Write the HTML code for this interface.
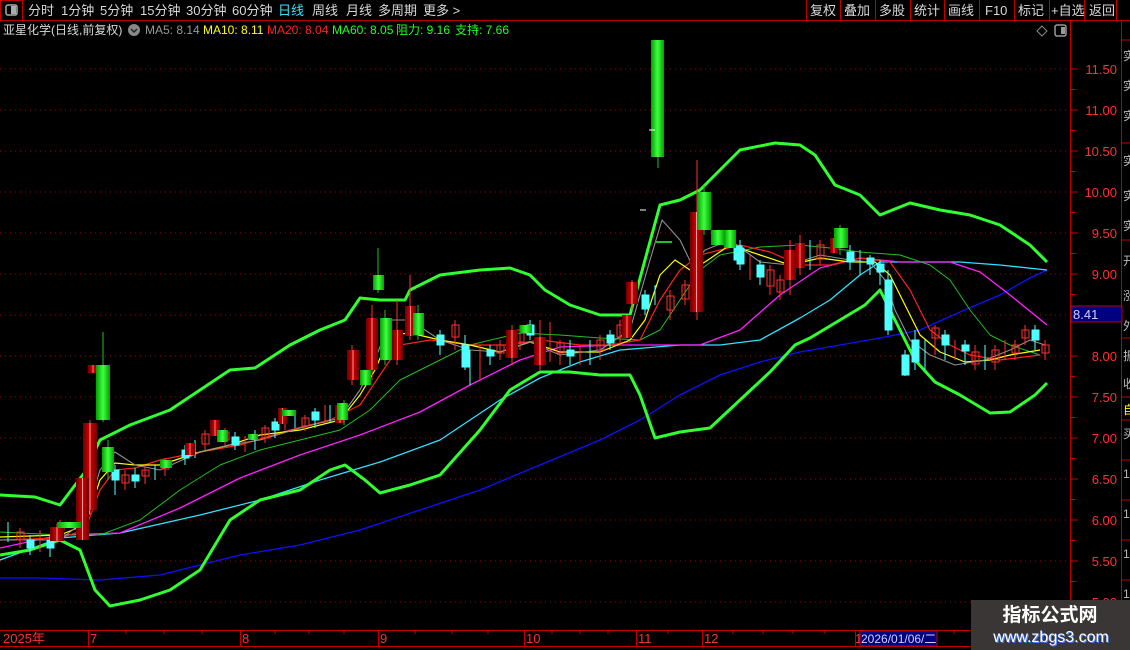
<!DOCTYPE html>
<html><head><meta charset="utf-8">
<style>
html,body{margin:0;padding:0;background:#000;width:1130px;height:650px;overflow:hidden;font-family:"Liberation Sans","Noto Sans CJK SC",sans-serif;}
.t{position:absolute;white-space:nowrap;}
</style></head><body>
<div style="position:relative;width:1130px;height:650px;">
<svg width="1130" height="650" style="position:absolute;left:0;top:0" font-family="Liberation Sans, Noto Sans CJK SC, sans-serif">
<defs>
<linearGradient id="rg" x1="0" x2="1"><stop offset="0" stop-color="#6a0000"/><stop offset="0.45" stop-color="#d00000"/><stop offset="0.5" stop-color="#ffffff"/><stop offset="0.55" stop-color="#d00000"/><stop offset="1" stop-color="#6a0000"/></linearGradient>
<linearGradient id="gg" x1="0" x2="1"><stop offset="0" stop-color="#00a000"/><stop offset="0.5" stop-color="#40ff40"/><stop offset="1" stop-color="#00a000"/></linearGradient>
</defs>
<!-- top toolbar -->
<rect x="0.5" y="0.5" width="22" height="20" fill="none" stroke="#c00000"/>
<rect x="6" y="5" width="11" height="10" rx="2" fill="none" stroke="#aaa" stroke-width="1.5"/><rect x="11" y="6" width="5" height="8" fill="#aaa"/>
<line x1="0" y1="20.5" x2="1130" y2="20.5" stroke="#c00000"/>
<g stroke="#c00000"><line x1="806.5" y1="0" x2="806.5" y2="20"/><line x1="840.5" y1="0" x2="840.5" y2="20"/><line x1="875.5" y1="0" x2="875.5" y2="20"/><line x1="910.5" y1="0" x2="910.5" y2="20"/><line x1="944.5" y1="0" x2="944.5" y2="20"/><line x1="979.5" y1="0" x2="979.5" y2="20"/><line x1="1014.5" y1="0" x2="1014.5" y2="20"/><line x1="1049.5" y1="0" x2="1049.5" y2="20"/><line x1="1084.5" y1="0" x2="1084.5" y2="20"/><line x1="1116.5" y1="0" x2="1116.5" y2="20"/></g>
<g font-size="13" fill="#d8d8d8">
<text x="28" y="15">分时</text><text x="61" y="15">1分钟</text><text x="100" y="15">5分钟</text><text x="140" y="15">15分钟</text><text x="186" y="15">30分钟</text><text x="232" y="15">60分钟</text><text x="278" y="15" fill="#40e0ff">日线</text><text x="312" y="15">周线</text><text x="346" y="15">月线</text><text x="378" y="15">多周期</text><text x="423" y="15">更多 &gt;</text>
<text x="810" y="15">复权</text><text x="844" y="15">叠加</text><text x="879" y="15">多股</text><text x="914" y="15">统计</text><text x="948" y="15">画线</text><text x="985" y="15">F10</text><text x="1018" y="15">标记</text><text x="1051" y="15">+自选</text><text x="1089" y="15">返回</text>
</g>
<!-- title row -->
<g font-size="12">
<text x="3" y="34" fill="#d8d8d8">亚星化学(日线,前复权)</text>
<circle cx="134" cy="30" r="6" fill="#888"/><path d="M131 29 L134 32 L137 29" stroke="#222" fill="none" stroke-width="1.5"/>
<text x="145" y="34" fill="#999">MA5: 8.14</text>
<text x="203" y="34" fill="#ffff00">MA10: 8.11</text>
<text x="267" y="34" fill="#ff2020">MA20: 8.04</text>
<text x="332" y="34" fill="#20ff20">MA60: 8.05</text>
<text x="396" y="34" fill="#20ff20">阻力: 9.16</text>
<text x="455" y="34" fill="#20ff20">支持: 7.66</text>
</g>
<path d="M1042 26 L1047 31 L1042 36 L1037 31 Z" fill="none" stroke="#888"/>
<rect x="1055" y="25" width="11" height="11" rx="2" fill="none" stroke="#999" stroke-width="1.5"/><rect x="1061" y="27" width="4" height="7" fill="#999"/>
<!-- grid -->
<g stroke="#a00000" stroke-dasharray="1,4">
<line x1="0" y1="69" x2="1068" y2="69"/><line x1="0" y1="110" x2="1068" y2="110"/><line x1="0" y1="151" x2="1068" y2="151"/><line x1="0" y1="192" x2="1068" y2="192"/><line x1="0" y1="233" x2="1068" y2="233"/><line x1="0" y1="274" x2="1068" y2="274"/><line x1="0" y1="315" x2="1068" y2="315"/><line x1="0" y1="356" x2="1068" y2="356"/><line x1="0" y1="397" x2="1068" y2="397"/><line x1="0" y1="438" x2="1068" y2="438"/><line x1="0" y1="479" x2="1068" y2="479"/><line x1="0" y1="520" x2="1068" y2="520"/><line x1="0" y1="561" x2="1068" y2="561"/><line x1="0" y1="602" x2="1068" y2="602"/>
</g>
<!-- axis -->
<line x1="1070.5" y1="21" x2="1070.5" y2="650" stroke="#c00000"/>
<line x1="1121.5" y1="21" x2="1121.5" y2="650" stroke="#c00000"/>
<g stroke="#c00000"><path d="M1071 69h7M1071 89.5h4M1071 110h7M1071 130.5h4M1071 151h7M1071 171.5h4M1071 192h7M1071 212.5h4M1071 233h7M1071 253.5h4M1071 274h7M1071 294.5h4M1071 356h7M1071 376.5h4M1071 397h7M1071 417.5h4M1071 438h7M1071 458.5h4M1071 479h7M1071 499.5h4M1071 520h7M1071 540.5h4M1071 561h7M1071 581.5h4M1071 602h7"/></g>
<g font-size="13" fill="#ff3030" text-anchor="end">
<text x="1117" y="74">11.50</text><text x="1117" y="115">11.00</text><text x="1117" y="156">10.50</text><text x="1117" y="197">10.00</text><text x="1117" y="238">9.50</text><text x="1117" y="279">9.00</text><text x="1117" y="361">8.00</text><text x="1117" y="402">7.50</text><text x="1117" y="443">7.00</text><text x="1117" y="484">6.50</text><text x="1117" y="525">6.00</text><text x="1117" y="566">5.50</text><text x="1117" y="607">5.00</text>
</g>
<rect x="1071" y="306" width="51" height="16" fill="#000080" stroke="#c00000"/>
<text x="1073" y="319" font-size="13" fill="#d0d0ff">8.41</text>
<g stroke="#c00000"><path d="M1122 40h8M1122 143h8M1122 240h8M1122 338h8M1122 397h8M1122 420h8M1122 460h8M1122 500h8M1122 540h8M1122 580h8"/></g>
<g font-size="12" fill="#bbb"><text x="1123" y="60">实</text><text x="1123" y="90">实</text><text x="1123" y="120">实</text><text x="1123" y="165">实</text><text x="1123" y="200">实</text><text x="1123" y="230">实</text><text x="1123" y="265">开</text><text x="1123" y="300">涨</text><text x="1123" y="330">外</text><text x="1123" y="360">振</text><text x="1123" y="388">收</text><text x="1123" y="414" fill="#ff0">自</text><text x="1123" y="438">买</text><text x="1123" y="478">1</text><text x="1123" y="518">1</text><text x="1123" y="558">1</text><text x="1123" y="598">1</text></g>
<!-- bands & MAs -->
<g fill="none" stroke-linejoin="round">
<polyline stroke="#1010ff" stroke-width="1.3" points="0,578 40,578 100,580 160,575 240,555 300,545 360,530 420,510 480,490 540,465 600,440 640,420 680,395 720,375 760,362 800,352 840,345 880,338 920,330 960,312 1000,295 1030,278 1047,270"/>
<polyline stroke="#30e0ff" stroke-width="1.3" points="0,560 60,538 120,533 200,515 260,500 320,480 380,462 440,440 500,400 540,378 580,362 620,350 680,345 720,345 760,340 800,318 830,300 860,275 880,262 920,262 960,262 1000,265 1047,270"/>
<polyline stroke="#ff20ff" stroke-width="1.3" points="0,548 60,535 120,533 180,508 240,478 300,455 360,435 420,412 470,385 520,360 560,347 620,345 660,345 700,345 740,330 780,295 820,268 860,258 900,262 950,262 980,272 1010,295 1047,325"/>
<polyline stroke="#20c020" stroke-width="1" points="0,532 60,535 100,535 140,520 180,490 220,465 260,450 300,440 340,430 370,410 400,380 440,360 470,345 520,333 560,335 600,338 640,340 660,330 680,300 700,270 720,255 760,247 800,245 830,248 860,252 900,255 930,265 950,280 970,310 990,335 1010,345 1040,355"/>
<polyline stroke="#ff2020" stroke-width="1.2" points="0,540 60,538 85,530 100,490 115,470 135,468 160,460 200,452 240,445 290,430 330,420 360,405 380,375 400,345 430,340 470,345 510,345 540,340 580,345 610,345 640,340 660,300 680,270 700,255 740,245 770,252 800,265 830,265 860,258 890,262 910,290 930,330 950,345 970,355 1000,360 1040,355"/>
<polyline stroke="#ffff00" stroke-width="1.2" points="0,537 60,535 85,525 100,480 115,463 135,465 160,465 200,452 230,445 260,435 300,430 340,420 360,395 375,370 390,335 410,333 440,340 470,345 500,352 530,342 560,352 600,352 630,340 645,320 660,275 675,260 690,270 705,262 730,245 760,255 790,265 820,258 850,262 875,262 890,275 905,305 920,335 940,352 965,362 990,360 1010,355 1040,350"/>
<polyline stroke="#909090" stroke-width="1.1" points="0,540 60,540 85,520 100,470 115,452 135,465 160,470 200,452 230,445 260,440 300,428 340,418 360,390 375,360 390,320 410,320 440,340 470,350 500,352 530,342 560,355 600,350 630,330 650,260 662,220 680,240 692,265 705,250 730,240 760,262 790,265 820,255 850,260 870,262 885,280 895,310 910,340 930,355 955,365 985,360 1010,350 1030,340 1045,345"/>
<polyline stroke="#30ff30" stroke-width="3" points="0,495 35,497 60,505 85,472 100,440 130,425 170,410 200,390 230,370 255,368 290,345 320,330 345,320 360,298 380,300 405,300 410,290 440,275 480,270 510,268 530,275 545,290 570,305 600,315 630,315 645,260 660,205 680,200 700,190 740,150 775,143 800,145 815,155 835,185 860,195 880,215 910,203 940,210 970,215 1000,225 1030,245 1047,262"/>
<polyline stroke="#30ff30" stroke-width="3" points="0,555 30,550 60,540 80,550 95,590 110,606 140,600 170,590 200,570 230,520 260,500 300,490 330,470 345,465 365,480 380,493 410,485 440,475 480,430 510,390 540,372 570,372 600,375 630,375 640,395 655,438 680,432 710,428 740,400 770,372 795,345 810,338 840,320 865,305 880,290 895,320 915,360 935,382 960,395 990,413 1010,412 1035,395 1047,383"/>
</g>
<!-- small candles -->
<g stroke-width="1">
<g stroke="#ff3030" fill="none">
<path d="M20 528v20M40 530v22M60 520v18M125 470v20M145 466v18M165 458v18M205 430v20M225 428v18M245 436v16M265 425v18M285 410v20M305 415v16M325 405v18M455 320v30M480 345v35M500 340v20M520 325v25M550 322v40M560 340v25M580 345v20M600 335v25M620 320v25M670 290v30M685 280v25M750 255v25M770 265v30M780 275v25M820 240v25M935 325v30M955 340v20M975 345v25M995 345v25M1005 340v20M1015 340v20M1025 325v20M1045 340v20"/>
<rect x="17" y="532" width="7" height="8"/><rect x="57" y="524" width="7" height="6"/><rect x="122" y="475" width="7" height="8"/><rect x="142" y="470" width="7" height="6"/><rect x="162" y="462" width="7" height="7"/><rect x="202" y="434" width="7" height="10"/><rect x="222" y="432" width="7" height="8"/><rect x="262" y="428" width="7" height="10"/><rect x="302" y="418" width="7" height="8"/><rect x="452" y="325" width="7" height="12"/><rect x="497" y="345" width="7" height="8"/><rect x="517" y="330" width="7" height="12"/><rect x="557" y="343" width="7" height="10"/><rect x="597" y="340" width="7" height="10"/><rect x="617" y="325" width="7" height="12"/><rect x="667" y="296" width="7" height="14"/><rect x="682" y="285" width="7" height="14"/><rect x="767" y="270" width="7" height="16"/><rect x="777" y="280" width="7" height="12"/><rect x="817" y="245" width="7" height="14"/><rect x="932" y="328" width="7" height="10"/><rect x="972" y="352" width="7" height="12"/><rect x="992" y="350" width="7" height="12"/><rect x="1012" y="345" width="7" height="8"/><rect x="1022" y="330" width="7" height="8"/><rect x="1042" y="345" width="7" height="8"/>
</g>
<g stroke="#50ffff" fill="#50ffff">
<path d="M8 522v20M30 535v20M50 535v22M115 465v30M135 468v20M155 465v15M185 445v20M195 440v18M235 432v18M255 430v20M275 418v20M295 410v18M315 408v20M330 405v18M440 330v25M465 335v35M470 350v35M490 345v20M530 320v20M570 340v25M590 340v25M610 330v20M645 290v25M655 285v20M740 240v30M760 260v25M810 240v30M850 245v25M860 250v25M870 255v20M880 260v25M915 330v40M925 340v30M945 330v30M965 340v25M985 345v25M1035 325v25"/>
<rect x="27" y="540" width="7" height="8"/><rect x="47" y="540" width="7" height="8"/><rect x="112" y="470" width="7" height="10"/><rect x="132" y="475" width="7" height="6"/><rect x="182" y="450" width="7" height="8"/><rect x="232" y="437" width="7" height="8"/><rect x="272" y="422" width="7" height="8"/><rect x="312" y="412" width="7" height="8"/><rect x="437" y="335" width="7" height="10"/><rect x="462" y="345" width="7" height="22"/><rect x="487" y="350" width="7" height="6"/><rect x="527" y="325" width="7" height="10"/><rect x="567" y="350" width="7" height="6"/><rect x="607" y="335" width="7" height="8"/><rect x="642" y="295" width="7" height="14"/><rect x="737" y="248" width="7" height="16"/><rect x="757" y="265" width="7" height="12"/><rect x="847" y="252" width="7" height="10"/><rect x="867" y="258" width="7" height="6"/><rect x="877" y="264" width="7" height="8"/><rect x="912" y="340" width="7" height="22"/><rect x="942" y="335" width="7" height="10"/><rect x="962" y="345" width="7" height="6"/><rect x="1032" y="330" width="7" height="10"/>
</g>
<!-- big cyan -->
<g stroke="#50ffff" fill="#50ffff"><path d="M888 270v65M905 350v26"/><rect x="885" y="280" width="7" height="50"/><rect x="902" y="355" width="7" height="20"/><rect x="734" y="246" width="8" height="14"/></g>
</g>
<!-- big red candles -->
<g>
<path d="M90 420v95M372 305v75M397 300v65M410 275v65M512 325v40M540 320v50M632 280v30M697 160v160M790 240v55M800 235v40M60 520v20M352 345v40" stroke="#ff3030"/>
<rect x="83" y="423" width="14" height="87" fill="url(#rg)"/>
<rect x="76" y="478" width="13" height="62" fill="url(#rg)"/>
<rect x="50" y="527" width="14" height="14" fill="url(#rg)"/>
<rect x="88" y="365" width="10" height="8" fill="url(#rg)"/>
<rect x="366" y="318" width="12" height="52" fill="url(#rg)"/>
<rect x="347" y="350" width="12" height="30" fill="url(#rg)"/>
<rect x="335" y="405" width="10" height="18" fill="url(#rg)"/>
<rect x="392" y="330" width="11" height="30" fill="url(#rg)"/>
<rect x="405" y="306" width="11" height="30" fill="url(#rg)"/>
<rect x="506" y="330" width="12" height="28" fill="url(#rg)"/>
<rect x="534" y="337" width="12" height="28" fill="url(#rg)"/>
<rect x="626" y="282" width="12" height="22" fill="url(#rg)"/>
<rect x="622" y="315" width="10" height="23" fill="url(#rg)"/>
<rect x="690" y="212" width="13" height="100" fill="url(#rg)"/>
<rect x="784" y="250" width="12" height="30" fill="url(#rg)"/>
<rect x="795" y="243" width="10" height="25" fill="url(#rg)"/>
<rect x="830" y="238" width="8" height="15" fill="url(#rg)"/>
<rect x="210" y="420" width="10" height="16" fill="url(#rg)"/>
<rect x="185" y="443" width="10" height="12" fill="url(#rg)"/>
<rect x="278" y="408" width="9" height="16" fill="url(#rg)"/>
</g>
<!-- big green candles -->
<g>
<path d="M103 332v90M108 440v40M658 40v128M704 185v50M378 248v45M385 310v55M418 305v35M840 225v30M344 400v25" stroke="#20c020"/>
<rect x="96" y="365" width="14" height="55" fill="url(#gg)"/>
<rect x="102" y="447" width="12" height="25" fill="url(#gg)"/>
<rect x="57" y="522" width="24" height="6" fill="url(#gg)"/>
<rect x="651" y="40" width="13" height="117" fill="url(#gg)"/>
<rect x="697" y="192" width="14" height="38" fill="url(#gg)"/>
<rect x="711" y="230" width="14" height="15" fill="url(#gg)"/>
<rect x="724" y="230" width="12" height="18" fill="url(#gg)"/>
<rect x="373" y="275" width="11" height="15" fill="url(#gg)"/>
<rect x="380" y="318" width="12" height="42" fill="url(#gg)"/>
<rect x="413" y="313" width="11" height="22" fill="url(#gg)"/>
<rect x="834" y="228" width="14" height="20" fill="url(#gg)"/>
<rect x="337" y="403" width="11" height="17" fill="url(#gg)"/>
<rect x="360" y="370" width="11" height="15" fill="url(#gg)"/>
<rect x="217" y="430" width="11" height="12" fill="url(#gg)"/>
<rect x="160" y="460" width="12" height="8" fill="url(#gg)"/>
<rect x="282" y="410" width="14" height="6" fill="url(#gg)"/>
<rect x="520" y="325" width="12" height="8" fill="url(#gg)"/>
<rect x="248" y="434" width="10" height="6" fill="url(#gg)"/>
</g>
<path d="M649 130h6M640 210h6" stroke="#fff"/>
<line x1="655" y1="242" x2="672" y2="242" stroke="#20c020" stroke-width="2"/>
<!-- date axis -->
<line x1="0" y1="630.5" x2="1130" y2="630.5" stroke="#c00000"/>
<line x1="0" y1="646.5" x2="1130" y2="646.5" stroke="#c00000"/>
<g stroke="#c00000"><path d="M88.5 631v15M240.5 631v15M378.5 631v15M524.5 631v15M636.5 631v15M702.5 631v15M855.5 631v15M126 631v3M164 631v3M202 631v3M275 631v3M309 631v3M344 631v3M415 631v3M452 631v3M488 631v3M552 631v3M580 631v3M608 631v3M668 631v3M733 631v3M763 631v3M793 631v3M825 631v3M954 631v3"/></g>
<g font-size="13" fill="#ff3030"><text x="3" y="643">2025年</text><text x="90" y="643">7</text><text x="242" y="643">8</text><text x="380" y="643">9</text><text x="526" y="643">10</text><text x="638" y="643">11</text><text x="704" y="643">12</text><text x="855" y="643">1</text></g>
<rect x="860" y="631" width="77" height="15" fill="#000080" stroke="#c00000"/>
<text x="861" y="643" font-size="12" fill="#d0d0ff">2026/01/06/二</text>
<!-- watermark -->
<rect x="971" y="600" width="159" height="50" fill="#3b3636"/>
<text x="1050" y="621" font-size="19" font-weight="bold" fill="#fff" text-anchor="middle">指标公式网</text>
<text x="1052" y="643" font-size="16" fill="#4080ff" text-anchor="middle">www.zbgs3.com</text>
<text x="1051" y="642" font-size="16" fill="#fff" text-anchor="middle">www.zbgs3.com</text>
</svg>
</div>
</body></html>
